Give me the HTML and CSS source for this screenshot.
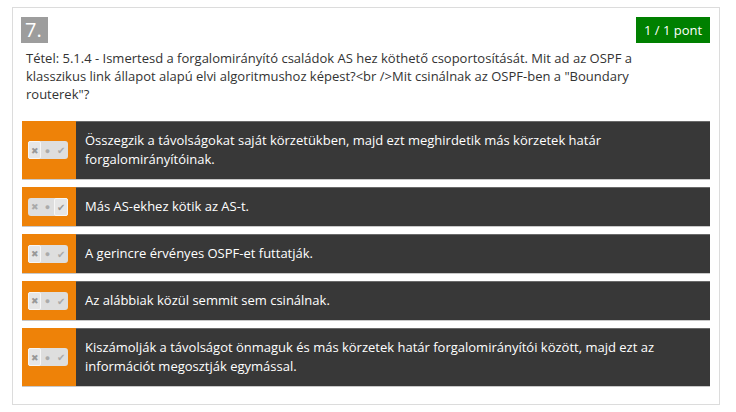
FILE: index.html
```html
<!DOCTYPE html>
<html lang="hu">
<head>
<meta charset="utf-8">
<link rel="stylesheet" href="styles.css">
</head>
<body>
<div class="card">
  <div class="head">
    <div class="num">7.</div>
    <div class="score">1 / 1 pont</div>
  </div>
  <p class="question">Tétel: 5.1.4 - Ismertesd a forgalomirányító családok AS hez köthető csoportosítását. Mit ad az OSPF a klasszikus link állapot alapú elvi algoritmushoz képest?&lt;br /&gt;Mit csinálnak az OSPF-ben a "Boundary routerek"?</p>
  <div class="answers">
    <div class="answer">
      <div class="mark"><div class="toggle sel-x"><span class="seg s-x">✖</span><span class="seg s-dot">●</span><span class="seg s-ok">✔</span></div></div>
      <div class="txt">Összegzik a távolságokat saját körzetükben, majd ezt meghirdetik más körzetek határ forgalomirányítóinak.</div>
    </div>
    <div class="answer">
      <div class="mark"><div class="toggle sel-ok"><span class="seg s-x">✖</span><span class="seg s-dot">●</span><span class="seg s-ok">✔</span></div></div>
      <div class="txt">Más AS-ekhez kötik az AS-t.</div>
    </div>
    <div class="answer">
      <div class="mark"><div class="toggle sel-x"><span class="seg s-x">✖</span><span class="seg s-dot">●</span><span class="seg s-ok">✔</span></div></div>
      <div class="txt">A gerincre érvényes OSPF-et futtatják.</div>
    </div>
    <div class="answer">
      <div class="mark"><div class="toggle sel-x"><span class="seg s-x">✖</span><span class="seg s-dot">●</span><span class="seg s-ok">✔</span></div></div>
      <div class="txt">Az alábbiak közül semmit sem csinálnak.</div>
    </div>
    <div class="answer">
      <div class="mark"><div class="toggle sel-x"><span class="seg s-x">✖</span><span class="seg s-dot">●</span><span class="seg s-ok">✔</span></div></div>
      <div class="txt">Kiszámolják a távolságot önmaguk és más körzetek határ forgalomirányítói között, majd ezt az információt megosztják egymással.</div>
    </div>
  </div>
</div>
</body>
</html>
```
FILE: styles.css
```css
* { box-sizing: border-box; }
html, body { margin: 0; padding: 0; background: #fff; }
body {
  font-family: "Open Sans", "Noto Sans", sans-serif;
  color: #333;
  padding: 7px 0 0 12px;
}
.card {
  width: 708px;
  height: 398px;
  border: 1px solid #dcdcdc;
  padding: 9px 9px 0 8px;
}
.head {
  display: flex;
  justify-content: space-between;
  align-items: flex-start;
  height: 26px;
}
.num {
  width: 27px;
  height: 26px;
  background: #9d9d9d;
  color: #fff;
  font-size: 20px;
  line-height: 26px;
  padding-left: 4px;
}
.score {
  width: 74px;
  height: 26px;
  background: #008000;
  color: #fff;
  font-size: 13px;
  line-height: 26px;
  text-align: center;
}
.question {
  margin: 6px 0 0 5px;
  font-size: 13px;
  line-height: 18px;
  color: #333;
  width: 660px;
}
.answers {
  margin-top: 18px;
  display: flex;
  flex-direction: column;
  gap: 8px;
  width: 688px;
  margin-left: 1px;
}
.answer {
  display: flex;
  background: #383838;
  border-top: 1px solid #6a6a6a;
  box-shadow: 0 1px 0 #c8c8c8;
}
.mark {
  width: 54px;
  flex: none;
  background: #ee8208;
  display: flex;
  align-items: center;
  padding-left: 6px;
  margin-top: -1px;
}
.toggle {
  display: flex;
  width: 40px;
  height: 18px;
  background: #dedede;
  border-radius: 3px;
}
.seg {
  width: 13px;
  height: 18px;
  display: flex;
  align-items: center;
  justify-content: center;
  color: #aaa;
  font-size: 9px;
  line-height: 1;
}
.s-ok { width: 14px; font-size: 10px; }
.s-dot { font-size: 9px; }
.sel-x .s-x, .sel-ok .s-ok {
  border: 1px solid #f6f6f6;
  background: #e6e6e6;
  color: #999;
  border-radius: 2px;
}
.txt {
  color: #fff;
  font-size: 13px;
  line-height: 19px;
  padding: 9px 10px 10px 9px;
}
```
